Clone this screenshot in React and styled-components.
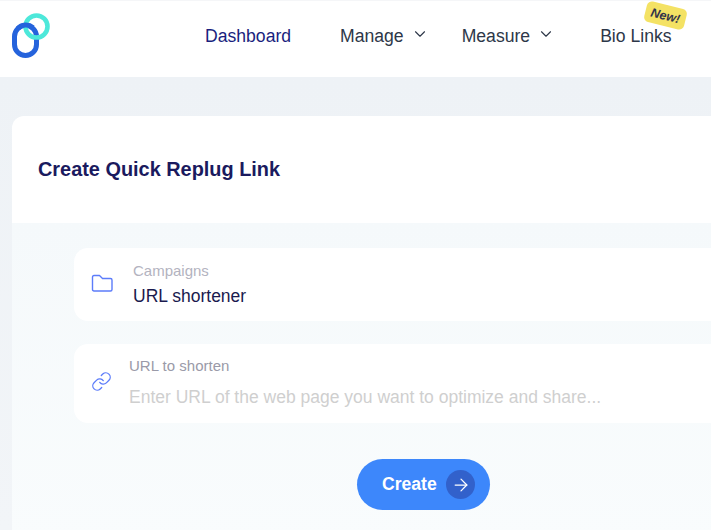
import React from "react";
import styled, { createGlobalStyle } from "styled-components";
import { ChevronDown, Link, ArrowRight } from "lucide-react";

const Global = createGlobalStyle`
  html, body { margin: 0; padding: 0; height: 100%; overflow: hidden; }
  body { font-family: "Liberation Sans", Arial, sans-serif; background: #eff3f6; }
  * { box-sizing: border-box; }
`;
const Page = styled.div`
  width: 711px; height: 530px; overflow: hidden;
  background: linear-gradient(180deg, #eef2f6 77px, #f2f5f8 530px);
`;
const Navbar = styled.header`
  height: 77px; background: #fff; display: flex; align-items: flex-start;
  padding: 12px 0 0 12px; border-top: 1px solid #f5f6f8;
`;
const Logo = styled.svg`
  width: 38px; height: 46px; flex: none;
`;
const Nav = styled.nav`
  display: flex; margin-left: 155px; padding-top: 12px; position: relative;
`;
const NavItem = styled.a`
  font-size: 17.6px; line-height: 22px; color: ${p => p.$active ? "#1a1f7e" : "#2d3748"};
  margin-right: ${p => p.$gap}px; display: flex; align-items: flex-start; gap: 7px;
  white-space: nowrap; position: relative;
  svg { margin-top: 0; color: #2d3748; }
`;
const Badge = styled.span`
  position: absolute; left: 45px; top: -20px; width: 41px; height: 21px;
  background: #f4e264; border-radius: 5px; transform: rotate(14deg);
  font-size: 12.5px; font-weight: 700; font-style: italic; color: #33344a;
  display: flex; align-items: center; justify-content: center;
`;
const Card = styled.section`
  margin: 39px 0 0 12px; width: 760px; border-radius: 12px 0 0 0; overflow: hidden;
`;
const CardHead = styled.div`
  height: 107px; background: #fff; display: flex; align-items: center; padding-left: 26px;
`;
const Title = styled.h1`
  margin: 0; font-size: 19.9px; font-weight: 700; color: #1a1a5e;
`;
const CardBody = styled.div`
  padding: 25px 0 0 62px; display: flex; flex-direction: column;
  background: linear-gradient(180deg, #f5f9fb, #f9fcfd);
  height: 320px;
`;
const Field = styled.div`
  height: ${p => p.$h}px; margin-bottom: ${p => p.$mb}px; background: #fff; border-radius: 14px;
  display: flex; align-items: center; padding-left: ${p => p.$pl}px; gap: ${p => p.$gap}px;
`;
const IconSlot = styled.span`
  display: flex; flex: none; color: #5c7cfa; margin-top: ${p => p.$mt}px;
`;
const FieldText = styled.div`
  display: flex; flex-direction: column; margin-top: ${p => p.$mt || 0}px;
`;
const Label = styled.span`
  font-size: 15px; line-height: 16px; color: ${p => p.$c};
`;
const Value = styled.span`
  font-size: ${p => p.$fs}px; line-height: 22px; margin-top: ${p => p.$mt}px; color: ${p => p.$c}; white-space: nowrap;
`;
const CreateButton = styled.button`
  align-self: flex-start; margin-left: 283px; width: 133px; height: 51px; border: 0; border-radius: 26px;
  background: #3d87fb; color: #fff; font: 700 17.6px "Liberation Sans", Arial, sans-serif;
  display: flex; align-items: center; padding: 0 15px 0 25px; justify-content: space-between;
`;
const ArrowCircle = styled.span`
  width: 29px; height: 29px; border-radius: 50%; background: #3261cb;
  display: flex; align-items: center; justify-content: center;
`;

export default function App() {
  return (
    <Page>
      <Global />
      <Navbar>
        <Logo viewBox="0 0 38 46" fill="none">
          <rect x="2.5" y="12.5" width="22" height="30" rx="11" stroke="#2563dc" strokeWidth="5" />
          <circle cx="24.5" cy="13.5" r="11" stroke="#4de8da" strokeWidth="4.6" />
          <path d="M 5.7 15.7 A 11 11 0 0 1 21 14.6" stroke="#2563dc" strokeWidth="5" />
        </Logo>
        <Nav>
          <NavItem $active $gap={49}>Dashboard</NavItem>
          <NavItem $gap={33}>Manage<ChevronDown size={18} strokeWidth={1.5} /></NavItem>
          <NavItem $gap={45}>Measure<ChevronDown size={18} strokeWidth={1.5} /></NavItem>
          <NavItem $gap={0}>Bio Links<Badge>New!</Badge></NavItem>
        </Nav>
      </Navbar>
      <Card>
        <CardHead><Title>Create Quick Replug Link</Title></CardHead>
        <CardBody>
          <Field $h={73} $mb={23} $pl={17} $gap={20}>
            <IconSlot $mt={-3}>
              <svg width="22" height="18" viewBox="0 0 22 18" fill="none" stroke="currentColor" strokeWidth="1.4" strokeLinejoin="round">
                <path d="M1.5 3 Q1.5 1.5 3 1.5 H8.5 L11.5 4.5 H19.5 Q21 4.5 21 6 V15.5 Q21 17 19.5 17 H3 Q1.5 17 1.5 15.5 Z" />
              </svg>
            </IconSlot>
            <FieldText>
              <Label $c="#b3b3c0">Campaigns</Label>
              <Value $c="#1a1a4e" $mt={6} $fs={17.5}>URL shortener</Value>
            </FieldText>
          </Field>
          <Field $h={79} $mb={36} $pl={17} $gap={17}>
            <IconSlot $mt={-5}>
              <Link size={21} strokeWidth={1.5} />
            </IconSlot>
            <FieldText $mt={-2}>
              <Label $c="#9a9aa8">URL to shorten</Label>
              <Value $c="#cfcfcf" $mt={12} $fs={17.5}>Enter URL of the web page you want to optimize and share...</Value>
            </FieldText>
          </Field>
          <CreateButton>Create<ArrowCircle><ArrowRight size={20} strokeWidth={1.5} /></ArrowCircle></CreateButton>
        </CardBody>
      </Card>
    </Page>
  );
}
